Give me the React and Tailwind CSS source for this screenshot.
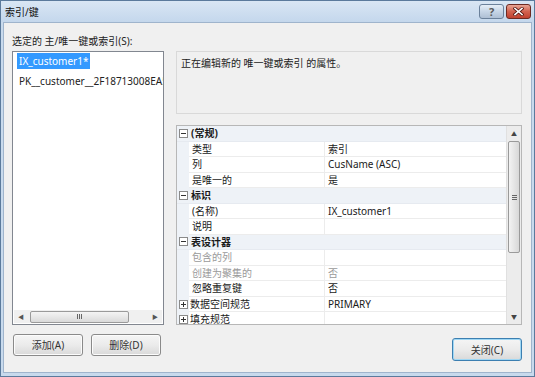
import React from "react";

const font = "font-['Segoe_UI','Noto_Sans','Noto_Sans_CJK_SC',sans-serif]";

const rows = [
  { type: "cat", name: "(常规)" },
  { name: "类型", value: "索引" },
  { name: "列", value: "CusName (ASC)" },
  { name: "是唯一的", value: "是" },
  { type: "cat", name: "标识" },
  { name: "(名称)", value: "IX_customer1" },
  { name: "说明", value: "" },
  { type: "cat", name: "表设计器" },
  { name: "包含的列", value: "", dim: true },
  { name: "创建为聚集的", value: "否", dim: true },
  { name: "忽略重复键", value: "否" },
  { name: "数据空间规范", value: "PRIMARY", expand: true },
  { name: "填充规范", value: "", expand: true },
];

function Box({ plus }) {
  return (
    <div className="relative w-[9px] h-[9px] border border-[#8a8a8a] bg-white">
      <div className="absolute left-[1px] right-[1px] top-[3px] h-px bg-[#333]" />
      {plus && <div className="absolute top-[1px] bottom-[1px] left-[3px] w-px bg-[#333]" />}
    </div>
  );
}

function GridRow({ row }) {
  if (row.type === "cat") {
    return (
      <div className="flex items-center h-[15.5px] shrink-0 bg-[#eef2f7] border-b border-[#e6eaf0]">
        <div className="w-[12px] flex justify-center pl-[1px]">
          <Box />
        </div>
        <span className="pl-[2px] font-bold text-[#1a1a1a]">{row.name}</span>
      </div>
    );
  }
  return (
    <div className="flex h-[15.5px] shrink-0">
      <div className="w-[12px] bg-[#eef2f7] flex items-center justify-center pl-[1px]">
        {row.expand && <Box plus />}
      </div>
      <div
        className={`w-[136px] flex items-center border-b border-r border-[#ececec] bg-white ${
          row.expand ? "pl-[1px]" : "pl-[3px]"
        } ${row.dim ? "text-[#9a9a9a]" : "text-[#1a1a1a]"}`}
      >
        {row.name}
      </div>
      <div
        className={`flex-1 flex items-center border-b border-[#ececec] bg-white pl-[3px] ${
          row.dim ? "text-[#9a9a9a]" : "text-[#1a1a1a]"
        }`}
      >
        {row.value}
      </div>
    </div>
  );
}

function WinButton({ children, primary, className = "" }) {
  return (
    <div
      className={`flex items-center justify-center rounded-[3px] border ${
        primary ? "border-[#3c7fb1] shadow-[inset_0_0_0_1px_#9fd7f4]" : "border-[#8a8a8a] shadow-[inset_0_0_0_1px_#fcfcfc]"
      } bg-gradient-to-b from-[#f5f5f5] via-[#ebebeb] to-[#d9d9d9] text-[#333] ${className}`}
    >
      {children}
    </div>
  );
}

export default function App() {
  return (
    <div className={`w-[535px] h-[377px] ${font} text-[10px] leading-none bg-[#c8daed] border border-[#5b7a9c] flex flex-col`}>
      <div className="h-[21px] flex items-center justify-between pl-[4px] pr-[3px] bg-gradient-to-b from-[#d9e6f4] to-[#c4d7ec]">
        <span className="text-[10px] text-[#111]">索引/键</span>
        <div className="flex gap-[2px] items-center">
          <div className="w-[25px] h-[15px] rounded-[3px] border border-[#6b819b] bg-gradient-to-b from-[#e6eef7] via-[#c6d5e6] to-[#aebfd4] flex items-center justify-center">
            <span className="text-[11px] font-bold text-[#5a5a5a]">?</span>
          </div>
          <div className="w-[25px] h-[15px] rounded-[3px] border border-[#6d2a22] bg-gradient-to-b from-[#e8a595] via-[#d2624f] to-[#c1412f] flex items-center justify-center">
            <svg width="11" height="9" viewBox="0 0 11 9">
              <path d="M2 1.5 L9 7.5 M9 1.5 L2 7.5" stroke="#5a1a14" strokeWidth="3.2" strokeLinecap="square" />
              <path d="M2 1.5 L9 7.5 M9 1.5 L2 7.5" stroke="#fff" strokeWidth="1.6" strokeLinecap="square" />
            </svg>
          </div>
        </div>
      </div>

      <div className="flex-1 mx-[2px] mb-[3px] bg-[#f0f0f0] border border-[#9fb4cc] flex flex-col pl-[8px] pr-[9px]">
        <div className="h-[28px] flex items-center pt-[8px] text-[#222]">选定的 主/唯一键或索引(S):</div>
        <div className="flex gap-[12px]">
          <div className="w-[152px] flex flex-col">
            <div className="h-[274px] bg-white border border-[#828790] flex flex-col">
              <div className="flex-1 pt-[1px] pl-[4px] overflow-hidden">
                <div className="inline-flex items-center h-[16px] px-[2px] bg-[#3399ff] text-white">IX_customer1*</div>
                <div className="flex items-center h-[21px] pl-[2px] pt-[3px] whitespace-nowrap text-[#222]">PK__customer__2F18713008EA5</div>
              </div>
              <div className="h-[13px] mb-[1px] mx-[1px] flex items-center bg-[#f0f0f0]">
                <div className="w-[14px] flex justify-center text-[6px] text-[#555]">◀</div>
                <div className="ml-[2px] w-[99px] h-[12px] rounded-[2px] border border-[#9a9a9a] bg-gradient-to-b from-[#f4f4f4] to-[#dadada] flex items-center justify-center">
                  <div className="flex gap-[1px]">
                    <div className="w-px h-[5px] bg-[#666]" />
                    <div className="w-px h-[5px] bg-[#666]" />
                    <div className="w-px h-[5px] bg-[#666]" />
                  </div>
                </div>
                <div className="flex-1" />
                <div className="w-[14px] flex justify-center text-[6px] text-[#555]">▶</div>
              </div>
            </div>
            <div className="flex gap-[8px] mt-[9px] pl-[1px]">
              <WinButton className="w-[70px] h-[22px]">添加(A)</WinButton>
              <WinButton className="w-[70px] h-[22px]">删除(D)</WinButton>
            </div>
          </div>

          <div className="w-[346px] flex flex-col">
            <div className="h-[63px] border border-[#d9d9d9] bg-[#f0f0f0] pl-[4px] pt-[6px] text-[#222]">
              正在编辑新的 唯一键或索引 的属性。
            </div>
            <div className="mt-[11px] h-[200px] border border-[#b7b7b7] bg-white flex">
              <div className="flex-1 overflow-hidden flex flex-col">
                {rows.map((r, i) => (
                  <GridRow key={i} row={r} />
                ))}
              </div>
              <div className="w-[15px] bg-[#ececec] border-l border-[#e0e0e0] flex flex-col">
                <div className="h-[15px] flex items-center justify-center text-[6px] text-[#444]">▲</div>
                <div className="mx-[1px] h-[112px] rounded-[2px] border border-[#9a9a9a] bg-gradient-to-r from-[#f3f3f3] to-[#d8d8d8] flex items-center justify-center">
                  <div className="flex flex-col gap-[1px]">
                    <div className="w-[5px] h-px bg-[#666]" />
                    <div className="w-[5px] h-px bg-[#666]" />
                    <div className="w-[5px] h-px bg-[#666]" />
                  </div>
                </div>
                <div className="flex-1" />
                <div className="h-[15px] flex items-center justify-center text-[6px] text-[#444]">▼</div>
              </div>
            </div>
            <div className="flex justify-end mt-[13px]">
              <WinButton primary className="w-[70px] h-[23px]">关闭(C)</WinButton>
            </div>
          </div>
        </div>
      </div>
    </div>
  );
}
